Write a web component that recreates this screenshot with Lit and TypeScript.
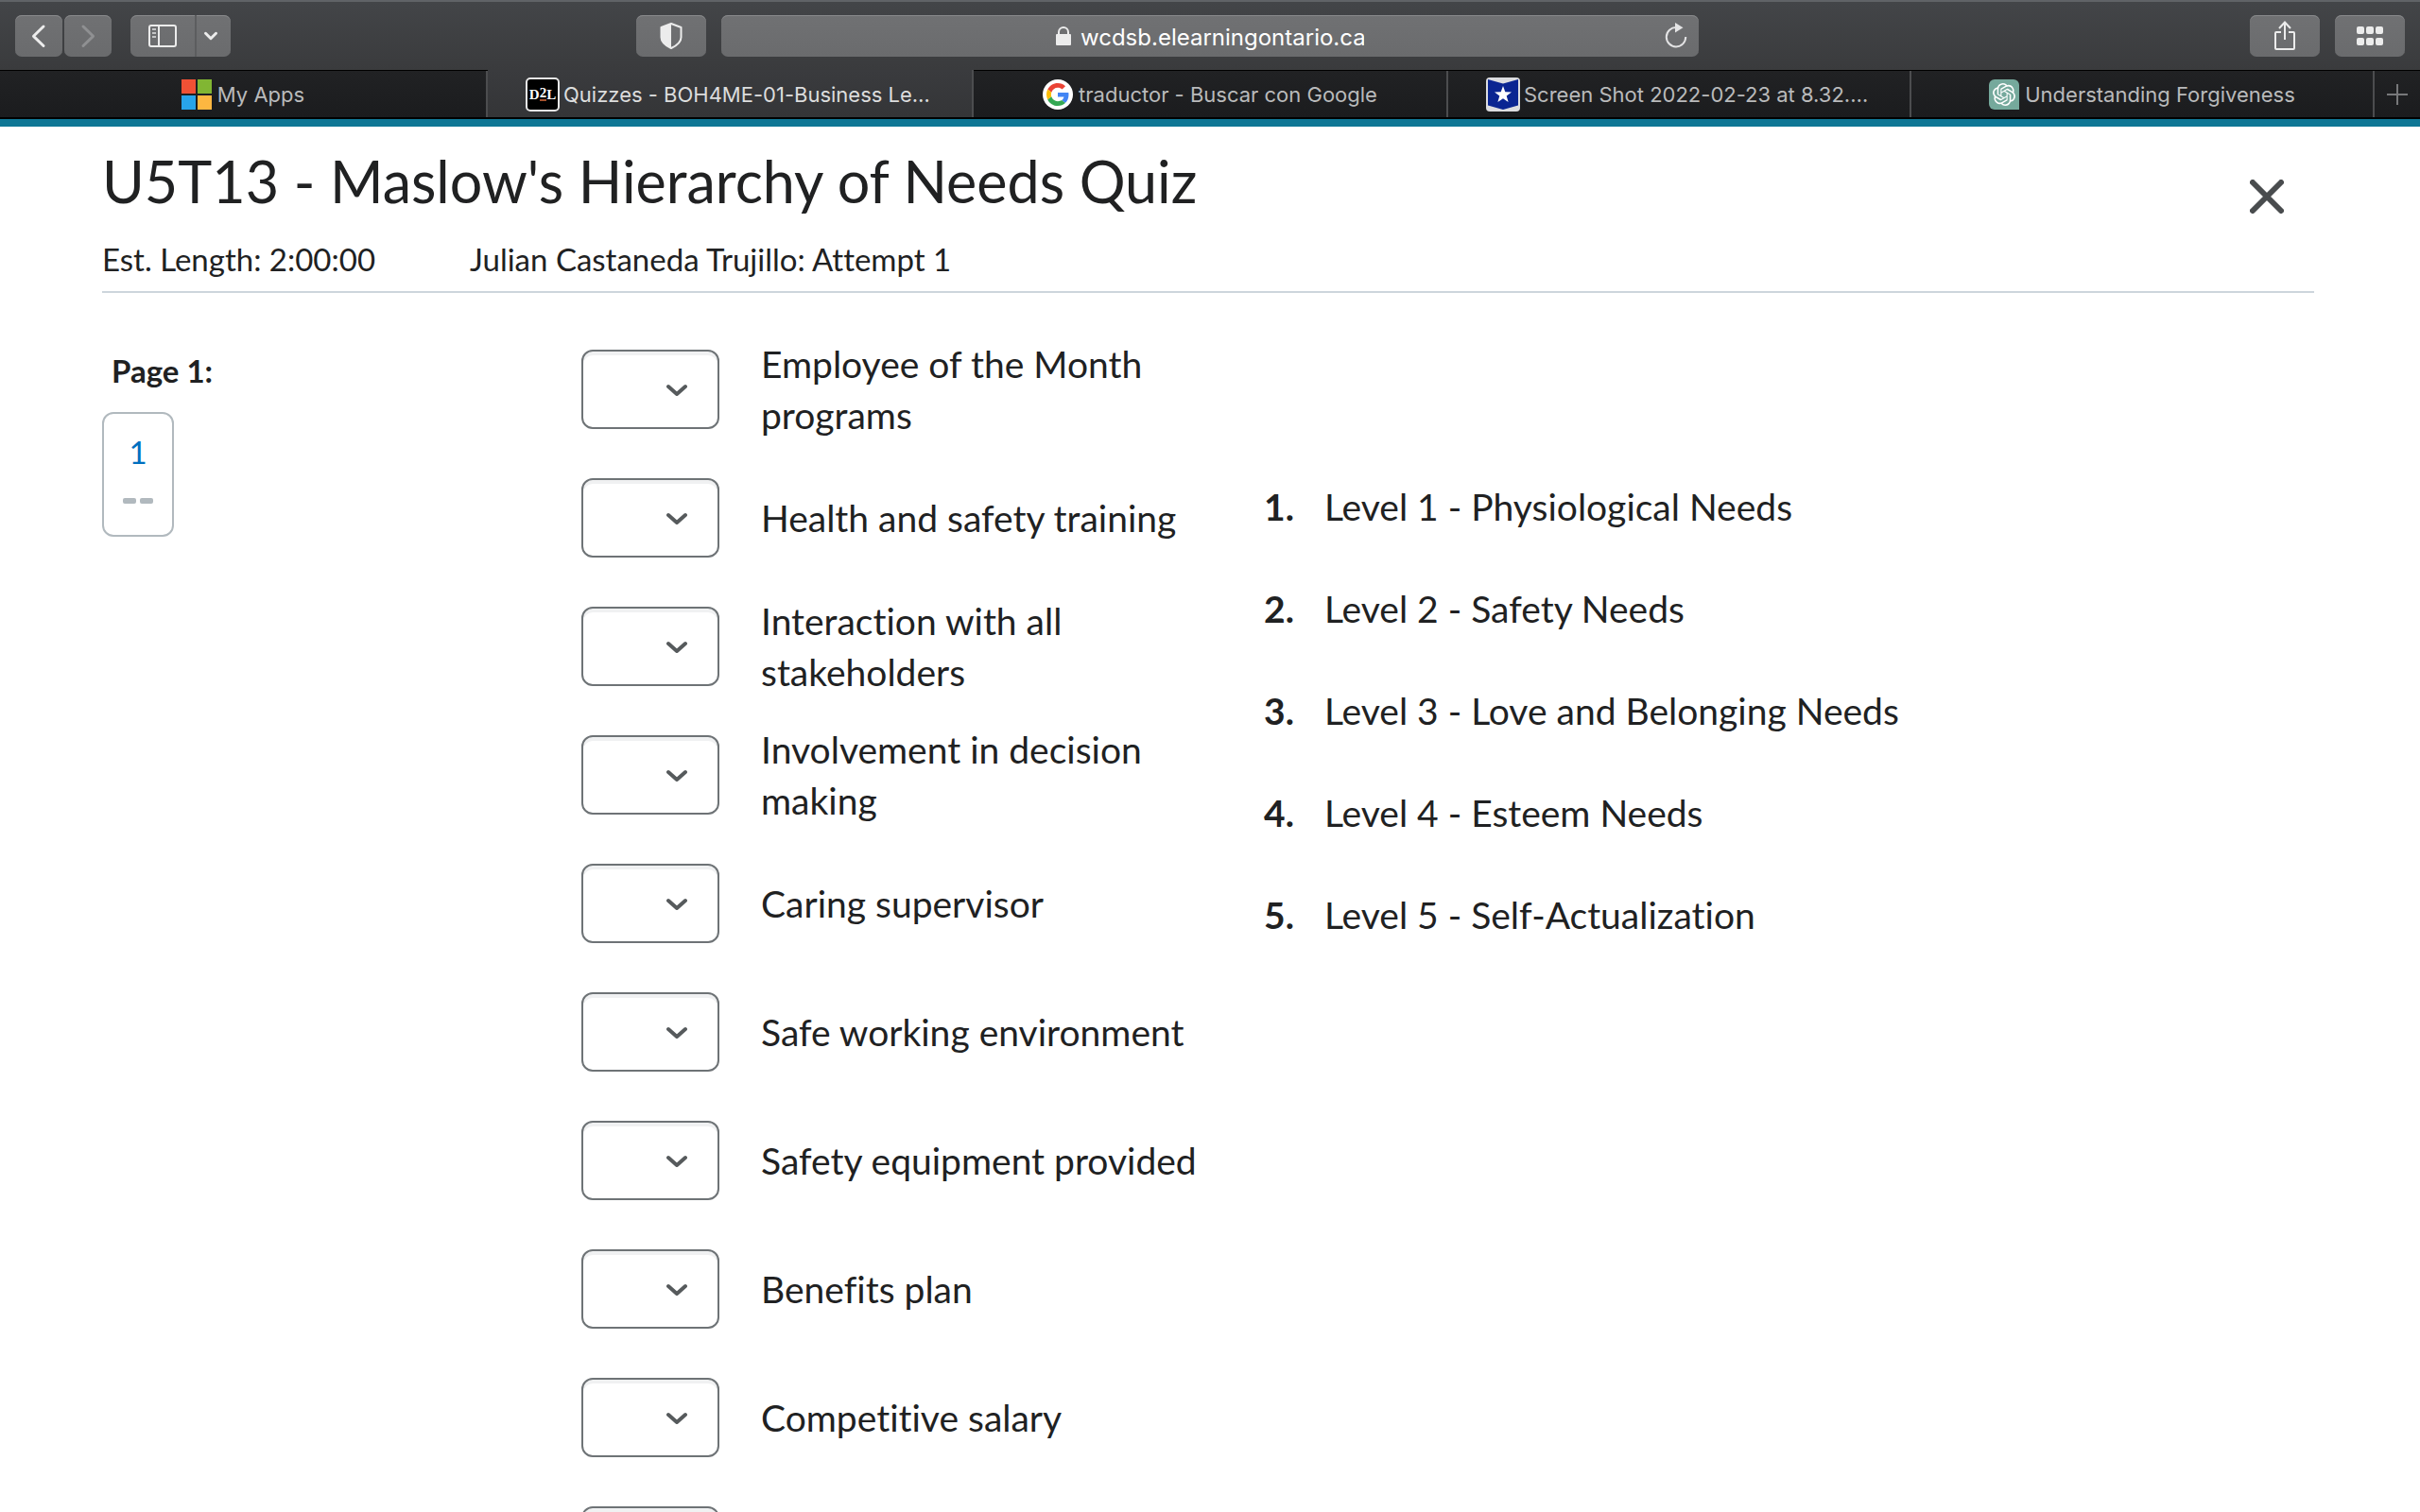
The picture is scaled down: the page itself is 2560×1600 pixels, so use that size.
import { LitElement, html, css, svg } from "lit";
import { customElement, property } from "lit/decorators.js";
import { classMap } from "lit/directives/class-map.js";

const icons = {
  back: svg`<svg width="50" height="44" viewBox="0 0 50 44" aria-hidden="true"><path d="M30 12 19.500 22.300 30 32.500" fill="none" stroke="#ececec" stroke-width="3" stroke-linecap="round" stroke-linejoin="round"/></svg>`,
  forward: svg`<svg width="50" height="44" viewBox="0 0 50 44" aria-hidden="true"><path d="M20 12 30.500 22.300 20 32.500" fill="none" stroke="#8f9092" stroke-width="3" stroke-linecap="round" stroke-linejoin="round"/></svg>`,
  sidebar: svg`<svg width="30" height="24" viewBox="0 0 30 24" aria-hidden="true"><rect x="1" y="1" width="28" height="22" rx="2" fill="none" stroke="#ececec" stroke-width="2"/><path d="M11 1v22" stroke="#ececec" stroke-width="2"/><path d="M4 5h4M4 9h4M4 13h4" stroke="#c4c5c6" stroke-width="2"/></svg>`,
  caret: svg`<svg width="16" height="10" viewBox="0 0 16 10" aria-hidden="true"><path d="M2.500 2.300 8 7.700l5.500-5.400" fill="none" stroke="#ececec" stroke-width="3" stroke-linecap="round" stroke-linejoin="round"/></svg>`,
  shield: svg`<svg width="24" height="28" viewBox="0 0 24 28" aria-hidden="true"><path d="M12 1 22.500 5v10.500c0 5-4 8.500-10.500 11.500C5.500 24 1.500 20.500 1.500 15.500V5z" fill="none" stroke="#ececec" stroke-width="2" stroke-linejoin="round"/><path d="M12 1v26C5.500 24 1.500 20.500 1.500 15.500V5z" fill="#ececec"/></svg>`,
  lock: svg`<svg width="16" height="20" viewBox="0 0 16 20" aria-hidden="true"><rect x="0" y="8" width="16" height="12" rx="1" fill="#ececec"/><path d="M3 9V6a5 5 0 0 1 10 0v3" fill="none" stroke="#ececec" stroke-width="2"/></svg>`,
  reload: svg`<svg width="24" height="28" viewBox="0 0 24 28" aria-hidden="true"><path d="M12.500 5A10.200 10.200 0 1 0 22.200 15" fill="none" stroke="#e4e4e5" stroke-width="2"/><path d="M11 0 19.500 5.300 11 10.500z" fill="#e4e4e5"/></svg>`,
  share: svg`<svg width="24" height="32" viewBox="0 0 24 32" aria-hidden="true"><path d="M8 12H3a1 1 0 0 0-1 1v16a1 1 0 0 0 1 1h18a1 1 0 0 0 1-1V13a1 1 0 0 0-1-1h-5M12 20V2M6 8l6-6.500L18 8" fill="none" stroke="#ececec" stroke-width="2"/></svg>`,
  grid: svg`<svg width="28" height="20" viewBox="0 0 28 20" aria-hidden="true" fill="#ececec">${[0, 10, 20].map(
    (x) => svg`<rect x=${x} y="0" width="8" height="8" rx="2"/><rect x=${x} y="12" width="8" height="8" rx="2"/>`
  )}</svg>`,
  plus: svg`<svg width="22" height="22" viewBox="0 0 22 22" aria-hidden="true"><path d="M11 0v22M0 11h22" stroke="#77787a" stroke-width="2"/></svg>`,
  close: svg`<svg width="36" height="36" viewBox="0 0 36 36" aria-hidden="true"><path d="M3 3l30 30M33 3 3 33" stroke="#494c4e" stroke-width="6" stroke-linecap="round"/></svg>`,
  chevron: svg`<svg width="22" height="14" viewBox="0 0 22 14" aria-hidden="true"><path d="M2 4l9 8 9-8" fill="none" stroke="#565a5c" stroke-width="4" stroke-linecap="round" stroke-linejoin="round"/></svg>`,
};

const favicons: Record<string, unknown> = {
  microsoft: svg`<svg width="32" height="32" viewBox="0 0 32 32" aria-hidden="true"><path fill="#f05135" d="M0 0h15v15H0z"/><path fill="#81b633" d="M17 0h15v15H17z"/><path fill="#28a4ea" d="M0 17h15v15H0z"/><path fill="#fdb741" d="M17 17h15v15H17z"/></svg>`,
  d2l: html`<span class="d2l" aria-hidden="true">D<span class="two">2</span>L</span>`,
  google: svg`<svg width="32" height="32" viewBox="0 0 64 64" aria-hidden="true"><circle cx="32" cy="32" r="32" fill="#fff"/><g transform="translate(8 8)"><path fill="#ea4335" d="M24 9.500c3.540 0 6.710 1.220 9.210 3.600l6.850-6.850C35.900 2.380 30.470 0 24 0 14.620 0 6.510 5.380 2.560 13.220l7.980 6.190C12.430 13.720 17.740 9.500 24 9.500z"/><path fill="#4285f4" d="M46.980 24.550c0-1.570-.15-3.090-.38-4.550H24v9.020h12.940c-.58 2.960-2.260 5.480-4.780 7.180l7.730 6c4.510-4.180 7.090-10.360 7.090-17.650z"/><path fill="#fbbc05" d="M10.530 28.590c-.48-1.450-.76-2.990-.76-4.590s.27-3.140.76-4.590l-7.980-6.190C.92 16.460 0 20.120 0 24c0 3.880.92 7.540 2.560 10.780l7.970-6.190z"/><path fill="#34a853" d="M24 48c6.480 0 11.930-2.130 15.890-5.810l-7.730-6c-2.150 1.450-4.920 2.300-8.160 2.300-6.260 0-11.570-4.220-13.470-9.910l-7.980 6.190C6.510 42.620 14.620 48 24 48z"/></g></svg>`,
  star: svg`<svg width="36" height="36" viewBox="0 0 36 36" aria-hidden="true"><rect width="36" height="36" rx="4" fill="#dcdde0"/><path fill="#0a2592" d="M2 2l16 4.500L34 2v27.500L18 34 2 29.500z"/><path fill="#fff" d="M18 9l2.300 6.300 6.700.2-5.300 4.100 1.900 6.400-5.600-3.800-5.600 3.800 1.900-6.400L9 15.500l6.700-.2z"/></svg>`,
  openai: svg`<svg width="32" height="32" viewBox="0 0 32 32" aria-hidden="true"><path fill="#75a99c" d="M6 0h20a6 6 0 0 1 6 6v26H6a6 6 0 0 1-6-6V6a6 6 0 0 1 6-6z"/><path fill="#fff" transform="translate(4 4)" d="M22.2819 9.8211a5.9847 5.9847 0 0 0-.5157-4.9108 6.0462 6.0462 0 0 0-6.5098-2.9A6.0651 6.0651 0 0 0 4.9807 4.1818a5.9847 5.9847 0 0 0-3.9977 2.9 6.0462 6.0462 0 0 0 .7427 7.0966 5.98 5.98 0 0 0 .511 4.9107 6.051 6.051 0 0 0 6.5146 2.9001A5.9847 5.9847 0 0 0 13.2599 24a6.0557 6.0557 0 0 0 5.7718-4.2058 5.9894 5.9894 0 0 0 3.9977-2.9001 6.0557 6.0557 0 0 0-.7475-7.0729zm-9.022 12.6081a4.4755 4.4755 0 0 1-2.8764-1.0408l.1419-.0804 4.7783-2.7582a.7948.7948 0 0 0 .3927-.6813v-6.7369l2.02 1.1686a.071.071 0 0 1 .038.052v5.5826a4.504 4.504 0 0 1-4.4945 4.4944zm-9.6607-4.1254a4.4708 4.4708 0 0 1-.5346-3.0137l.142.0852 4.783 2.7582a.7712.7712 0 0 0 .7806 0l5.8428-3.3685v2.3324a.0804.0804 0 0 1-.0332.0615L9.74 19.9502a4.4992 4.4992 0 0 1-6.1408-1.6464zM2.3408 7.8956a4.485 4.485 0 0 1 2.3655-1.9728V11.6a.7664.7664 0 0 0 .3879.6765l5.8144 3.3543-2.0201 1.1685a.0757.0757 0 0 1-.071 0l-4.8303-2.7865A4.504 4.504 0 0 1 2.3408 7.872zm16.5963 3.8558L13.1038 8.364 15.1192 7.2a.0757.0757 0 0 1 .071 0l4.8303 2.7913a4.4944 4.4944 0 0 1-.6765 8.1042v-5.6772a.79.79 0 0 0-.407-.667zm2.0107-3.0231l-.142-.0852-4.7735-2.7818a.7759.7759 0 0 0-.7854 0L9.409 9.2297V6.8974a.0662.0662 0 0 1 .0284-.0615l4.8303-2.7866a4.4992 4.4992 0 0 1 6.6802 4.66zM8.3065 12.863l-2.02-1.1638a.0804.0804 0 0 1-.038-.0567V6.0742a4.4992 4.4992 0 0 1 7.3757-3.4537l-.142.0805L8.704 5.459a.7948.7948 0 0 0-.3927.6813zm1.0976-2.3654l2.602-1.4998 2.6069 1.4998v2.9994l-2.5974 1.4997-2.6067-1.4997Z"/></svg>`,
};

interface Tab {
  icon: string;
  title: string;
  active?: boolean;
  clipped?: boolean;
}

const tabs: Tab[] = [
  { icon: "microsoft", title: "My Apps" },
  { icon: "d2l", title: "Quizzes - BOH4ME-01-Business Le…", active: true, clipped: true },
  { icon: "google", title: "traductor - Buscar con Google" },
  { icon: "star", title: "Screen Shot 2022-02-23 at 8.32.…", clipped: true },
  { icon: "openai", title: "Understanding Forgiveness" },
];

@customElement("browser-toolbar")
class BrowserToolbar extends LitElement {
  static styles = css`
    :host {
      display: block;
      font-family: Inter, "Liberation Sans", sans-serif;
    }
    svg {
      display: block;
      flex: none;
    }
    button {
      appearance: none;
      margin: 0;
      padding: 0;
      border: 0;
      font: inherit;
      color: inherit;
      background: none;
      display: flex;
      align-items: center;
      justify-content: center;
    }
    .bar {
      box-sizing: border-box;
      height: 75px;
      padding: 14px 16px 0;
      border-top: 2px solid #606367;
      border-bottom: 1px solid #000;
      background: linear-gradient(#434548, #3a3b3d);
      display: grid;
      grid-template-columns: minmax(0, 747fr) minmax(0, 1034fr) minmax(0, 747fr);
      align-items: start;
    }
    .start,
    .end,
    .nav,
    .split {
      display: flex;
    }
    .start {
      padding-right: 16px;
    }
    .nav {
      gap: 2px;
      margin-right: 20px;
    }
    .end {
      justify-content: flex-end;
      gap: 16px;
    }
    .tool {
      box-sizing: border-box;
      height: 44px;
      width: 74px;
      border-radius: 7px;
      background: linear-gradient(#707173, #6a6b6d);
      box-shadow: inset 0 1px 0 #88898b;
    }
    .nav .tool {
      width: 50px;
    }
    .split .tool:first-child {
      width: 70px;
      border-radius: 7px 0 0 7px;
      border-right: 2px solid #5c5d5f;
    }
    .split .tool:last-child {
      width: 36px;
      padding-right: 6px;
      border-radius: 0 7px 7px 0;
    }
    .shield {
      margin-left: auto;
    }
    .address {
      height: 44px;
      border-radius: 7px;
      background: linear-gradient(#707173, #6a6b6d);
      box-shadow: inset 0 1px 0 #88898b;
      display: grid;
      grid-template-columns: 48px 1fr 48px;
      align-items: center;
    }
    .site {
      grid-column: 2;
      display: flex;
      align-items: center;
      justify-content: center;
      gap: 10px;
    }
    .url {
      box-sizing: border-box;
      width: 300px;
      height: 44px;
      margin: 0;
      padding: 2px 0 0;
      border: 0;
      outline: 0;
      background: none;
      font: 400 24px/40px Inter, "Liberation Sans", sans-serif;
      color: #fff;
    }
    .tabs {
      height: 49px;
      border-bottom: 2px solid #000;
      display: grid;
      grid-template-columns:
        minmax(0, 516fr) minmax(0, 514fr) minmax(0, 502fr) minmax(0, 490fr)
        minmax(0, 490fr) 48px;
      background: linear-gradient(#212224, #1b1c1e);
    }
    .tab {
      gap: 6px;
      border-right: 2px solid #4c4d4f;
      font-size: 22px;
      font-weight: 400;
      line-height: 32px;
      color: #b9babb;
      white-space: nowrap;
    }
    .clipped {
      justify-content: flex-start;
      gap: 4px;
      padding-left: 40px;
    }
    .active {
      margin-top: -1px;
      padding-top: 1px;
      background: linear-gradient(#3a3b3e, #343537);
      color: #dcdddd;
    }
    .d2l {
      box-sizing: border-box;
      width: 36px;
      height: 36px;
      flex: none;
      border: 2px solid #e8e8e8;
      border-radius: 5px;
      background: #000;
      color: #fff;
      display: flex;
      align-items: center;
      justify-content: center;
      font: 700 15px/16px "Liberation Serif", serif;
    }
    .two {
      height: 13px;
      line-height: 13px;
      border-bottom: 2px solid #a5502c;
    }
  `;

  render() {
    return html`
      <div class="bar">
        <div class="start">
          <div class="nav">
            <button class="tool" aria-label="Back">${icons.back}</button>
            <button class="tool" aria-label="Forward">${icons.forward}</button>
          </div>
          <div class="split">
            <button class="tool" aria-label="Sidebar">${icons.sidebar}</button>
            <button class="tool" aria-label="Tab groups">${icons.caret}</button>
          </div>
          <button class="tool shield" aria-label="Privacy report">${icons.shield}</button>
        </div>
        <div class="address">
          <div class="site">
            ${icons.lock}
            <input class="url" aria-label="Address" type="text" spellcheck="false" value="wcdsb.elearningontario.ca" />
          </div>
          <button aria-label="Reload">${icons.reload}</button>
        </div>
        <div class="end">
          <button class="tool" aria-label="Share">${icons.share}</button>
          <button class="tool" aria-label="Tab overview">${icons.grid}</button>
        </div>
      </div>
      <nav class="tabs" aria-label="Tabs">
        ${tabs.map(
          (t) => html`<button class=${classMap({ tab: true, active: !!t.active, clipped: !!t.clipped })}>
            ${favicons[t.icon]}<span>${t.title}</span>
          </button>`
        )}
        <button aria-label="New tab">${icons.plus}</button>
      </nav>
    `;
  }
}

@customElement("match-row")
class MatchRow extends LitElement {
  @property() label = "";
  @property({ type: Number }) choices = 5;

  static styles = css`
    :host {
      display: grid;
      grid-template-columns: 146px minmax(0, 1fr);
      column-gap: 44px;
      align-items: center;
      min-height: 136px;
      padding-right: 60px;
    }
    .picker {
      display: grid;
      align-items: center;
    }
    .picker > * {
      grid-area: 1 / 1;
    }
    select {
      appearance: none;
      box-sizing: border-box;
      width: 100%;
      height: 84px;
      margin: 0;
      padding: 0 56px 0 24px;
      border: 2px solid #6e7376;
      border-radius: 12px;
      background: #fff;
      box-shadow: inset 0 4px 0 #f0f1f2;
      font: inherit;
      color: inherit;
    }
    svg {
      display: block;
      justify-self: end;
      margin-right: 34px;
      pointer-events: none;
    }
  `;

  render() {
    return html`
      <div class="picker">
        <select id="choice" aria-label=${this.label || "Choice"}>
          <option value=""></option>
          ${Array.from({ length: this.choices }, (_, i) => html`<option>${i + 1}</option>`)}
        </select>
        ${icons.chevron}
      </div>
      <label for="choice">${this.label}</label>
    `;
  }
}

const needs = [
  "Employee of the Month programs",
  "Health and safety training",
  "Interaction with all stakeholders",
  "Involvement in decision making",
  "Caring supervisor",
  "Safe working environment",
  "Safety equipment provided",
  "Benefits plan",
  "Competitive salary",
  "",
];

const levels = [
  "Level 1 - Physiological Needs",
  "Level 2 - Safety Needs",
  "Level 3 - Love and Belonging Needs",
  "Level 4 - Esteem Needs",
  "Level 5 - Self-Actualization",
];

@customElement("app-root")
class AppRoot extends LitElement {
  static styles = css`
    :host {
      display: flex;
      flex-direction: column;
      height: 100vh;
      overflow: hidden;
      background: #fff;
      color: #202122;
      font-family: Lato, "Liberation Sans", sans-serif;
      font-variant-ligatures: none;
    }
    browser-toolbar {
      flex: none;
    }
    .page {
      flex: 1;
      min-height: 0;
      overflow: hidden;
      border-top: 8px solid #0f7795;
      padding: 22px 112px 0 108px;
    }
    .head {
      display: flex;
      justify-content: space-between;
      align-items: flex-start;
      padding-bottom: 12px;
      border-bottom: 2px solid #cdd5dc;
    }
    h1 {
      margin: 0 0 24px;
      font-size: 61px;
      font-weight: 400;
      line-height: 72px;
    }
    .meta {
      display: flex;
      gap: 100px;
      font-size: 33px;
      line-height: 44px;
    }
    .close {
      appearance: none;
      width: 60px;
      height: 60px;
      margin: 22px 20px 0 0;
      padding: 0;
      border: 0;
      background: none;
      display: grid;
      place-items: center;
    }
    .quiz {
      display: grid;
      grid-template-columns: minmax(0, 507fr) minmax(0, 722fr) minmax(0, 1111fr);
      align-items: start;
      padding-top: 34px;
      font-size: 39px;
      line-height: 54px;
    }
    .pages {
      padding-top: 26px;
      font-size: 33px;
      line-height: 44px;
    }
    h2 {
      margin: 0 0 22px 10px;
      font-size: 33px;
      font-weight: 700;
      line-height: 44px;
    }
    .question {
      box-sizing: border-box;
      width: 76px;
      height: 132px;
      padding-top: 18px;
      border: 2px solid #b1b9be;
      border-radius: 12px;
      display: flex;
      flex-direction: column;
      align-items: center;
      gap: 27px;
      color: #006fbf;
      text-decoration: none;
    }
    .dashes {
      display: flex;
      gap: 4px;
    }
    .dash {
      width: 14px;
      height: 6px;
      border-radius: 2px;
      background: #b1b9be;
    }
    ul,
    ol {
      margin: 0;
      padding: 0;
      list-style: none;
    }
    .levels {
      padding-top: 165px;
      display: grid;
      gap: 54px;
    }
    .level {
      display: flex;
    }
    .number {
      flex: none;
      width: 64px;
      font-weight: 700;
    }
  `;

  render() {
    return html`
      <browser-toolbar></browser-toolbar>
      <main class="page">
        <header class="head">
          <div>
            <h1>U5T13 - Maslow's Hierarchy of Needs Quiz</h1>
            <div class="meta">
              <span>Est. Length: 2:00:00</span>
              <span>Julian Castaneda Trujillo: Attempt 1</span>
            </div>
          </div>
          <button class="close" aria-label="Close">${icons.close}</button>
        </header>
        <div class="quiz">
          <aside class="pages">
            <h2>Page 1:</h2>
            <a class="question" href="#question-1">
              <span>1</span>
              <span class="dashes"><span class="dash"></span><span class="dash"></span></span>
            </a>
          </aside>
          <ul id="question-1">
            ${needs.map((n) => html`<li><match-row .label=${n} .choices=${levels.length}></match-row></li>`)}
          </ul>
          <ol class="levels">
            ${levels.map(
              (l, i) => html`<li class="level"><span class="number">${i + 1}.</span><span>${l}</span></li>`
            )}
          </ol>
        </div>
      </main>
    `;
  }
}
